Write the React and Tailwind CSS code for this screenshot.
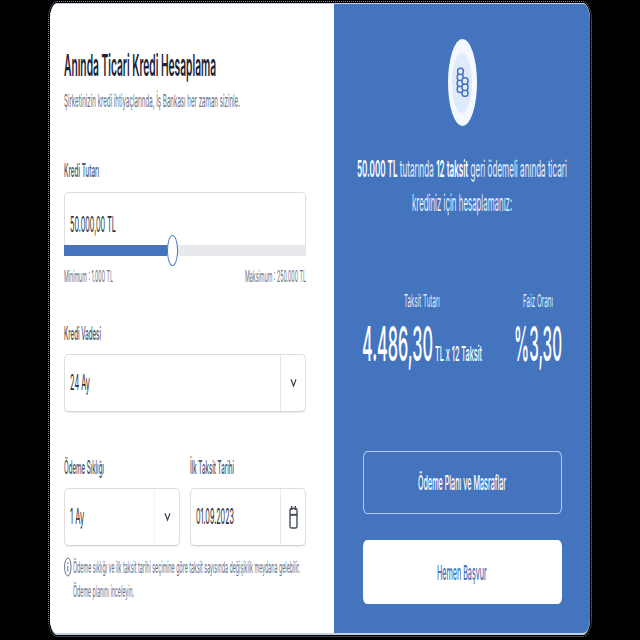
import { useLayoutEffect, useRef, useState } from "react";

// One line of condensed text: the glyphs are squeezed to the width of the box.
function Line({ className = "", children }) {
  const box = useRef(null);
  const text = useRef(null);
  const [scale, setScale] = useState(1);
  useLayoutEffect(() => {
    setScale(box.current.clientWidth / text.current.offsetWidth);
  }, []);
  return (
    <div ref={box} className={`flex shrink-0 items-center whitespace-nowrap ${className}`}>
      <span ref={text} className="inline-block shrink-0 origin-left" style={{ transform: `scaleX(${scale})` }}>
        {children}
      </span>
    </div>
  );
}

function Chevron() {
  return (
    <svg className="h-[10px] w-[7px]" viewBox="0 0 7 10" fill="none" stroke="#3b4254" strokeWidth="1.2">
      <path d="M1 1.2 3.5 8 6 1.2" />
    </svg>
  );
}

function Calendar() {
  return (
    <svg className="h-[25px] w-[9px]" viewBox="0 0 9 25" fill="none" stroke="#454c60" strokeWidth="1.4">
      <rect x="1" y="3.5" width="7" height="19.5" rx="1.2" ry="2" />
      <path d="M1 9.8h7" strokeWidth="2" />
      <path d="M2.7 1v4M6.3 1v4" />
    </svg>
  );
}

// Two stacks of coins, the right one shorter and in front.
function Coins() {
  return (
    <svg className="h-[32px] w-[13px]" viewBox="0 0 13 32" fill="#dfeafc" stroke="#4574be" strokeWidth="1.5">
      <rect x="1.2" y="19" width="6" height="6.4" rx="2.4" ry="3" />
      <rect x="1.2" y="13" width="6" height="6.4" rx="2.4" ry="3" />
      <rect x="1.2" y="7" width="6" height="6.4" rx="2.4" ry="3" />
      <rect x="1.6" y="1.2" width="5.8" height="6.2" rx="2.6" ry="3" />
      <rect x="6" y="23.2" width="6" height="6" rx="2.4" ry="3" />
      <rect x="6" y="17" width="6" height="6.4" rx="2.4" ry="3" />
      <rect x="6" y="10.8" width="6" height="6.4" rx="2.6" ry="3" />
    </svg>
  );
}

function Select({ className, divider, icon, children }) {
  return (
    <div className={`flex h-[58px] rounded-[4px/6px] border border-[#dcdee3] border-b-[#d3d6dc] bg-white shadow-[0_1px_1px_#eceef1] ${className}`}>
      <div className="flex flex-1 items-center pl-[5px] text-[21px] text-[#2b3040]">{children}</div>
      <div className={`flex w-[25px] items-center justify-center border-l ${divider}`}>{icon}</div>
    </div>
  );
}

function LoanForm() {
  return (
    <section className="flex w-[284px] flex-col bg-white pr-[28px] pl-[14px] text-[#4b5366]">
      <Line className="mt-[46px] h-[30px] w-[152px] text-[30px] font-semibold text-[#1c2233]">Anında Ticari Kredi Hesaplama</Line>
      <Line className="mt-[12px] h-[20px] w-[176px] text-[17px] text-[#697085]">Şirketinizin kredi ihtiyaçlarında, İş Bankası her zaman sizinle.</Line>

      <Line className="mt-[48px] h-[20px] w-[35px] text-[18px] font-medium">Kredi Tutarı</Line>
      <div className="mt-[12px] flex h-[64px] w-[242px] flex-col justify-between rounded-t-[5px] border border-b-0 border-[#dcdee3]">
        <Line className="mt-[20px] ml-[5px] h-[22px] w-[46px] text-[21.5px] text-[#2b3040]">50.000,00 TL</Line>
        <div className="-mx-px flex h-[11px] items-center bg-[#e7e9ed]">
          <div className="h-[11px] w-[103px] bg-[#4574be]" />
          <div className="h-[31px] w-[11px] rounded-[50%] border border-[#4574be] bg-white" />
        </div>
      </div>
      <div className="mt-[10px] flex w-[242px] justify-between text-[16px] text-[#697085]">
        <Line className="h-[20px] w-[49px]">Minimum : 1.000 TL</Line>
        <Line className="h-[20px] w-[61px]">Maksimum : 250.000 TL</Line>
      </div>

      <Line className="mt-[37px] h-[20px] w-[37px] text-[18px] font-medium">Kredi Vadesi</Line>
      <Select className="mt-[11px] w-[242px]" divider="border-[#e6e8ec]" icon={<Chevron />}>
        <Line className="w-[20px]">24 Ay</Line>
      </Select>

      <div className="mt-[45px] flex w-[242px] text-[18px] font-medium">
        <Line className="mr-[86px] h-[20px] w-[40px]">Ödeme Sıklığı</Line>
        <Line className="h-[20px] w-[44px]">İlk Taksit Tarihi</Line>
      </div>
      <div className="mt-[11px] flex w-[242px] gap-[10px]">
        <Select className="w-[116px]" divider="border-[#f5f6f8]" icon={<Chevron />}>
          <Line className="w-[14px]">1 Ay</Line>
        </Select>
        <Select className="w-[116px]" divider="border-[#e6e8ec]" icon={<Calendar />}>
          <Line className="w-[38px]">01.09.2023</Line>
        </Select>
      </div>

      <div className="mt-[11px] flex gap-px text-[16.5px] text-[#697085]">
        <svg className="h-[20px] w-[8px]" viewBox="0 0 8 20" fill="none" stroke="#697085" strokeWidth="1">
          <ellipse cx="3.8" cy="10" rx="3.2" ry="9" />
          <path d="M3.8 9v5.5M3.8 5.5v1.5" />
        </svg>
        <div className="flex flex-col gap-[4px]">
          <Line className="h-[20px] w-[227px]">Ödeme sıklığı ve ilk taksit tarihi seçimine göre taksit sayısında değişiklik meydana gelebilir.</Line>
          <Line className="h-[20px] w-[61px]">Ödeme planını inceleyin.</Line>
        </div>
      </div>
    </section>
  );
}

function Summary() {
  return (
    <section className="flex w-[256px] flex-col items-center bg-[#4574be] text-white">
      <div className="mt-[35px] flex h-[87px] w-[29px] items-center justify-center rounded-[50%] bg-[#f4f8ff]">
        <div className="flex h-[60px] w-[20px] items-center justify-center rounded-[50%] bg-[#dfeafc]">
          <Coins />
        </div>
      </div>
      <Line className="mt-[32px] h-[22px] w-[210px] text-[22.5px] text-[#e4edfc]">
        <b className="font-semibold text-white">50.000 TL</b> tutarında <b className="font-semibold text-white">12 taksit</b> geri ödemeli anında ticari
      </Line>
      <Line className="mt-[12px] h-[22px] w-[100px] text-[22.5px] text-[#e4edfc]">krediniz için hesaplamanız:</Line>

      <div className="mt-[76px] flex w-[200px] justify-between">
        <div className="flex w-[120px] flex-col items-center">
          <Line className="h-[22px] w-[36px] text-[17.5px] text-[#dfeafc]">Taksit Tutarı</Line>
          <div className="mt-[7px] flex gap-[2px]">
            <Line className="h-[50px] w-[71px] text-[48px] font-medium">4.486,30</Line>
            <Line className="mt-[10px] h-[50px] w-[47px] text-[20.5px] font-medium">TL x 12 Taksit</Line>
          </div>
        </div>
        <div className="flex w-[48px] flex-col items-center">
          <Line className="h-[22px] w-[30px] text-[17.5px] text-[#dfeafc]">Faiz Oranı</Line>
          <Line className="mt-[7px] h-[50px] w-[48px] text-[48px] font-medium">%3,30</Line>
        </div>
      </div>

      <button className="mt-[72px] flex h-[63px] w-[199px] items-center justify-center rounded-[4px/7px] border border-[#b4c9ea] pt-[2px]">
        <Line className="h-[22px] w-[88px] text-[20.5px] font-medium">Ödeme Planı ve Masraflar</Line>
      </button>
      <button className="mt-[26px] flex h-[64px] w-[199px] items-center justify-center rounded-[4px/7px] bg-white pt-[2px]">
        <Line className="h-[22px] w-[50px] text-[20.5px] font-medium text-[#4574be]">Hemen Başvur</Line>
      </button>
    </section>
  );
}

export default function App() {
  return (
    <main className="flex h-[640px] w-[640px] justify-center bg-black pt-px font-['Inter',sans-serif]">
      <div className="h-[636px] w-[544px] rounded-[9px/18px] border border-dotted border-[#8a8a8a] p-px">
        <div className="flex h-[632px] w-[540px] overflow-hidden rounded-[7px/16px] border-t border-b-2 border-[#c3d1e8] bg-white">
          <LoanForm />
          <Summary />
        </div>
      </div>
    </main>
  );
}
